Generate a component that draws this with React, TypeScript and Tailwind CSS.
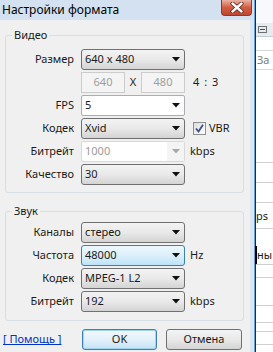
import type { ReactNode } from "react";

function Arrow({ muted = false }: { muted?: boolean }) {
  return (
    <svg width="8" height="5" viewBox="0 0 8 5" className="shrink-0">
      <path d="M0 0 H8 L4 4.5 Z" fill={muted ? "#a8a8a8" : "#101010"} />
    </svg>
  );
}

function Combo({ value, variant = "button" }: { value: string; variant?: "button" | "edit" | "disabled" | "hover" }) {
  const cls =
    variant === "edit"
      ? "bg-white border-[#abadb3] rounded-[2px]"
      : variant === "disabled"
      ? "bg-white border-[#d9d9d9] rounded-[2px] text-[#9a9a9a]"
      : variant === "hover"
      ? "bg-gradient-to-b from-[#ecf7fd] via-[#dcf0fb] to-[#bde3f8] border-[#3c7fb1] rounded-[3px]"
      : "bg-gradient-to-b from-[#f3f3f3] via-[#e9e9e9] to-[#d4d4d4] border-[#707070] rounded-[3px]";
  return (
    <div className={`h-[21px] w-[104px] border flex items-center pl-[3px] pr-[4px] ${cls}`}>
      <span className="flex-1 truncate">{value}</span>
      {variant === "disabled" ? (
        <div className="h-full w-[17px] flex items-center justify-center bg-[#f4f4f4] -mr-[4px]">
          <Arrow muted />
        </div>
      ) : (
        <Arrow />
      )}
    </div>
  );
}

function Row({ label, children, extra }: { label: string; children: ReactNode; extra?: ReactNode }) {
  return (
    <div className="flex items-center h-[21px]">
      <div className="w-[69px] text-right pr-[1px]">{label}</div>
      <div className="ml-[6px]">{children}</div>
      {extra && <div className="ml-[5px] flex items-center">{extra}</div>}
    </div>
  );
}

function Group({ title, children, className }: { title: string; children: ReactNode; className: string }) {
  return (
    <div className={`relative ml-[5px] w-[239px] border border-[#d5dfe5] rounded-[3px] ${className}`}>
      <span className="absolute -top-[9px] left-[6px] px-[2px] bg-[#f0f0f0] leading-[16px]">{title}</span>
      <div className="flex flex-col gap-[2px]">{children}</div>
    </div>
  );
}

export default function App() {
  return (
    <div className="w-[273px] h-[352px] overflow-hidden flex bg-white text-[11px] text-[#1a1a1a] font-['Noto_Sans',sans-serif]">
      <div className="w-[254px] flex flex-col bg-gradient-to-b from-[#d4e1f0] to-[#e0e9f4]">
        <div className="h-[20px] flex items-start shrink-0">
          <div className="pl-[2px] pt-[2px] text-[12px] leading-[16px] text-black">Настройки формата</div>
          <div className="ml-auto mr-[2px] w-[31px] h-[16px] rounded-b-[4px] border border-t-0 border-[#8a3a2e] bg-gradient-to-b from-[#eab1a3] via-[#d25c42] to-[#c0472e] flex items-center justify-center">
            <svg width="14" height="11" viewBox="0 0 14 11">
              <path d="M2.5 1.5 L11.5 9.5 M11.5 1.5 L2.5 9.5" stroke="#5a2218" strokeWidth="4" strokeLinecap="round" />
              <path d="M2.5 1.5 L11.5 9.5 M11.5 1.5 L2.5 9.5" stroke="#ffffff" strokeWidth="2.4" strokeLinecap="round" />
            </svg>
          </div>
        </div>
        <div className="flex-1 flex">
          <div className="w-[250px] bg-[#f0f0f0] flex flex-col">
            <Group title="Видео" className="mt-[15px] pt-[13px] pb-[7px]">
              <Row label="Размер">
                <Combo value="640 x 480" />
              </Row>
              <Row label="" extra={<span className="ml-[3px] tracking-[1px]">4 : 3</span>}>
                <div className="flex items-center w-[104px]">
                  <div className="w-[44px] h-[21px] border border-[#cccccc] bg-[#f4f4f4] text-[#a0a0a0] flex items-center justify-center">640</div>
                  <span className="flex-1 text-center">X</span>
                  <div className="w-[44px] h-[21px] border border-[#cccccc] bg-[#f4f4f4] text-[#a0a0a0] flex items-center justify-center">480</div>
                </div>
              </Row>
              <Row label="FPS">
                <Combo value="5" variant="edit" />
              </Row>
              <Row
                label="Кодек"
                extra={
                  <div className="ml-[3px] flex items-center gap-[3px]">
                    <div className="w-[13px] h-[13px] border border-[#8f8f8f] bg-gradient-to-br from-[#dcdcdc] to-[#ffffff] flex items-center justify-center">
                      <svg width="9" height="9" viewBox="0 0 9 9">
                        <path d="M1 4.5 L3.5 7.5 L8 0.8" stroke="#3c4f8c" strokeWidth="1.8" fill="none" />
                      </svg>
                    </div>
                    <span>VBR</span>
                  </div>
                }
              >
                <Combo value="Xvid" />
              </Row>
              <Row label="Битрейт" extra={<span>kbps</span>}>
                <Combo value="1000" variant="disabled" />
              </Row>
              <Row label="Качество">
                <Combo value="30" />
              </Row>
            </Group>
            <Group title="Звук" className="mt-[18px] pt-[10px] pb-[8px]">
              <Row label="Каналы">
                <Combo value="стерео" />
              </Row>
              <Row label="Частота" extra={<span>Hz</span>}>
                <Combo value="48000" variant="hover" />
              </Row>
              <Row label="Кодек">
                <Combo value="MPEG-1 L2" />
              </Row>
              <Row label="Битрейт" extra={<span>kbps</span>}>
                <Combo value="192" />
              </Row>
            </Group>
            <div className="mt-[8px] flex items-center h-[21px]">
              <span className="ml-[3px] w-[60px] text-[#0033cc] underline">[ Помощь ]</span>
              <div className="ml-[19px] w-[75px] h-[21px] rounded-[3px] border border-[#3c7fb1] bg-gradient-to-b from-[#f2f9fd] via-[#e3f1fa] to-[#c6e3f5] shadow-[inset_0_0_0_1px_#9fd6f3] flex items-center justify-center">
                OK
              </div>
              <div className="ml-[9px] w-[76px] h-[21px] rounded-[3px] border border-[#707070] bg-gradient-to-b from-[#f3f3f3] via-[#e9e9e9] to-[#d4d4d4] flex items-center justify-center">
                Отмена
              </div>
            </div>
          </div>
          <div className="w-[4px] bg-[#dbe6f3]" />
        </div>
      </div>
      <div className="w-px bg-[#6fa3d2]" />
      <div className="w-px bg-[#1c2a3a]" />
      <div className="flex-1 flex flex-col bg-white text-[11px]">
        <div className="h-[23px] bg-[#f7f9fc]" />
        <div className="h-[14px] bg-[#e6ebf1] border-b border-[#c4cbd4] flex items-center pl-[2px]">
          <div className="w-[9px] h-[7px] border border-[#707070] flex items-center justify-center">
            <div className="w-[5px] h-px bg-[#505050]" />
          </div>
        </div>
        <div className="h-[13px]" />
        <div className="h-[20px] border-y border-[#d8d8d8] text-[#808080] leading-[18px] pl-[1px]">За</div>
        <div className="h-[92px]" />
        <div className="h-[20px] border-t border-[#d0d0d0]" />
        <div className="h-[20px] border-t border-[#d0d0d0]" />
        <div className="h-[26px] border-t border-[#d0d0d0] leading-[26px]">ps</div>
        <div className="h-[18px] border-t border-[#d0d0d0]" />
        <div className="h-[18px] border-l-2 border-black leading-[18px] -ml-px">ны</div>
        <div className="h-[13px] border-t border-[#d0d0d0]" />
        <div className="h-[28px] border-t border-[#d0d0d0]" />
        <div className="h-[17px] border-t border-[#d0d0d0]" />
        <div className="h-[9px] border-t border-[#d0d0d0]" />
        <div className="h-[13px] border-t border-[#d0d0d0]" />
        <div className="flex-1 border-t border-[#d0d0d0]" />
      </div>
    </div>
  );
}
